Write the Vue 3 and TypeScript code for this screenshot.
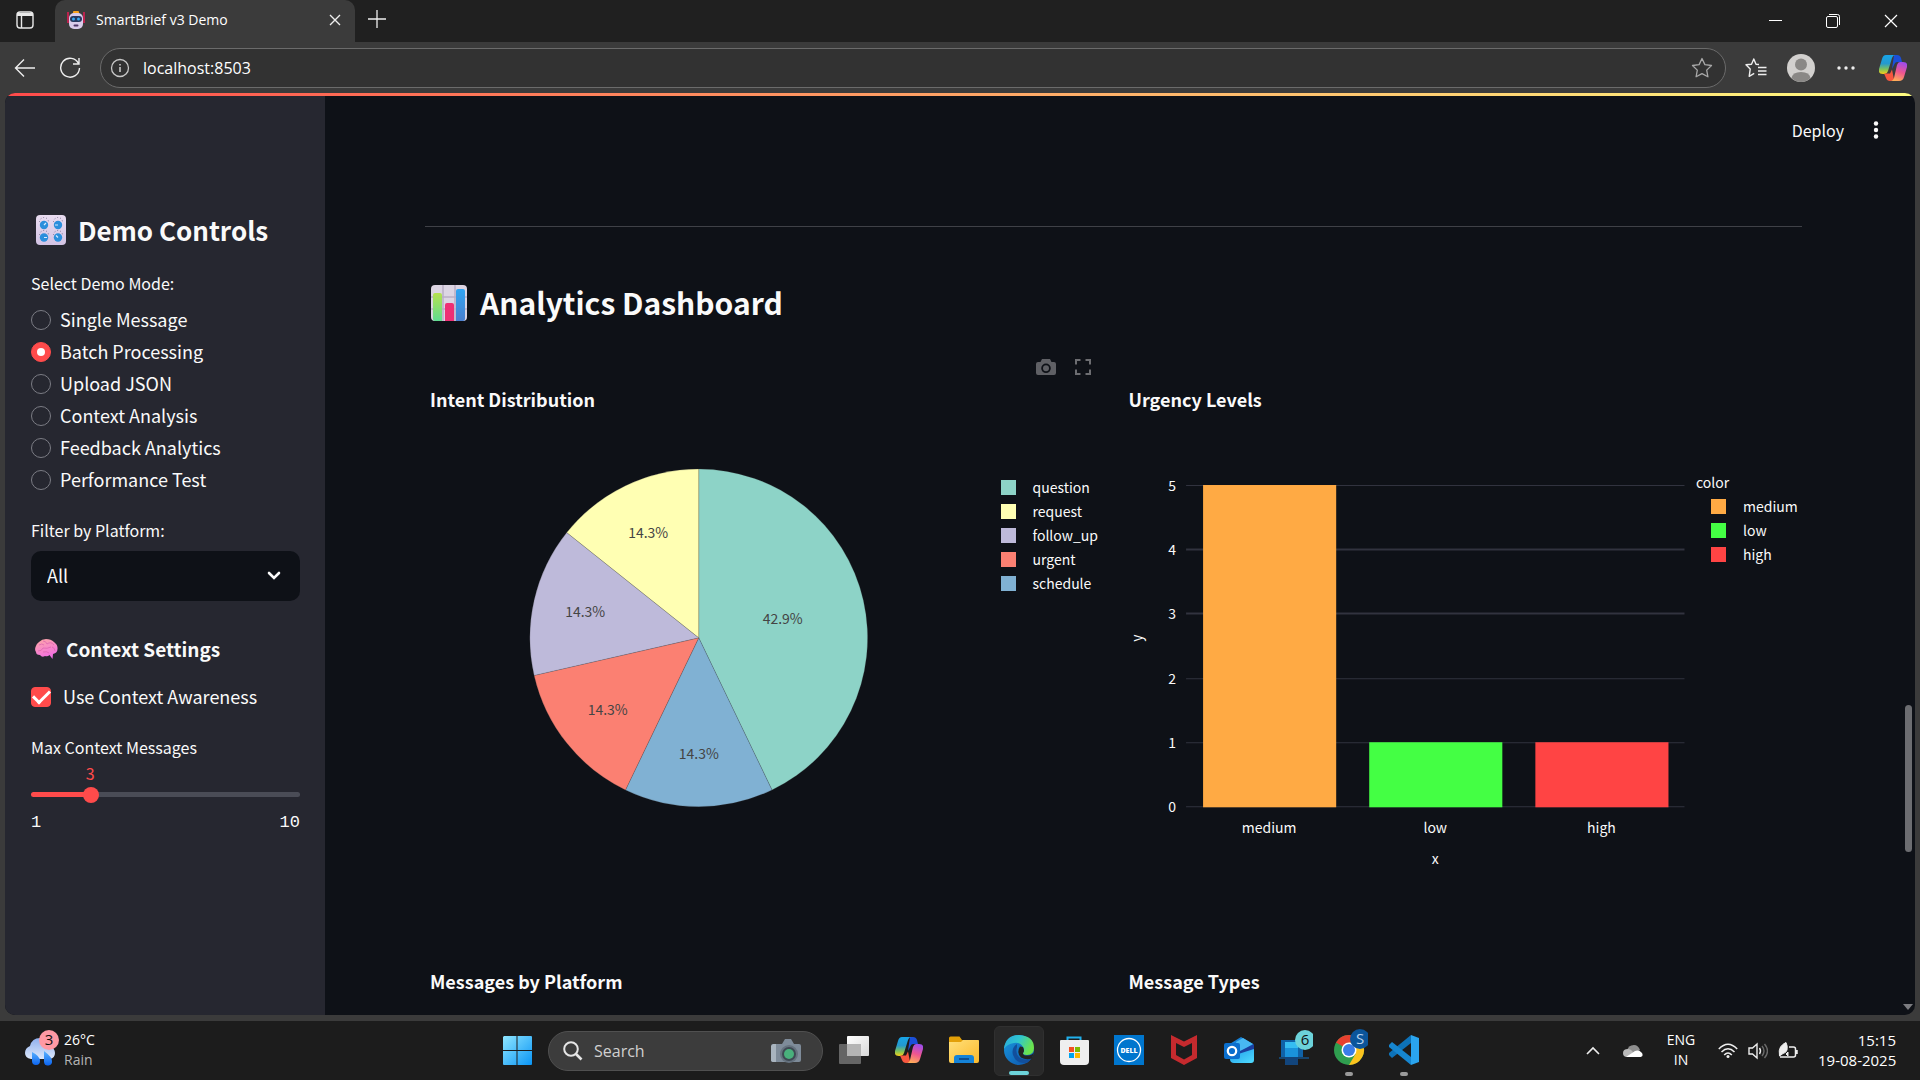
<script setup lang="ts">
import { computed, ref } from 'vue'

interface Slice { label: string; value: number; color: string }

const modes = ['Single Message', 'Batch Processing', 'Upload JSON', 'Context Analysis', 'Feedback Analytics', 'Performance Test']
const mode = ref('Batch Processing')
const platform = ref('All')
const contextAware = ref(true)
const maxMessages = ref(3)
const address = ref('localhost:8503')
const query = ref('')

const filled = computed(() => ((maxMessages.value - 1) / 9) * 100)

const intents: Slice[] = [
  { label: 'question', value: 3, color: '#8dd3c7' },
  { label: 'request', value: 1, color: '#ffffb3' },
  { label: 'follow_up', value: 1, color: '#bebada' },
  { label: 'urgent', value: 1, color: '#fb8072' },
  { label: 'schedule', value: 1, color: '#80b1d3' },
]

const cx = 274
const cy = 168
const radius = 169

/* The largest slice runs clockwise from the top, the others follow counterclockwise. */
const slices = computed(() => {
  const total = intents.reduce((sum, s) => sum + s.value, 0)
  const ordered = [intents[0], ...intents.slice(1).reverse()]
  let turn = 0
  return ordered.map((s) => {
    const a = turn * Math.PI * 2
    turn += s.value / total
    const b = turn * Math.PI * 2
    const mid = (a + b) / 2
    const large = b - a > Math.PI ? 1 : 0
    const reach = radius * (s.value > 1 ? 0.51 : 0.69)
    const at = (t: number, r: number) => `${cx + r * Math.sin(t)} ${cy - r * Math.cos(t)}`
    return {
      ...s,
      path: `M${cx} ${cy}L${at(a, radius)}A${radius} ${radius} 0 ${large} 1 ${at(b, radius)}Z`,
      x: cx + reach * Math.sin(mid),
      y: cy - reach * Math.cos(mid) + 5,
      share: `${((s.value / total) * 100).toFixed(1)}%`,
    }
  })
})

const urgency: Slice[] = [
  { label: 'medium', value: 5, color: '#ffaa44' },
  { label: 'low', value: 1, color: '#44ff44' },
  { label: 'high', value: 1, color: '#ff4444' },
]
const ticks = [0, 1, 2, 3, 4, 5]
const tickY = (v: number) => Math.round(336 - v * 64.2)
</script>

<template>
  <div class="desktop">
    <svg class="defs" width="0" height="0" aria-hidden="true">
      <defs>
        <linearGradient id="cpA" x1="0" y1="0" x2="0" y2="1"><stop offset="0" stop-color="#17a5e8" /><stop offset=".45" stop-color="#2499cf" /><stop offset=".75" stop-color="#7fc25a" /><stop offset="1" stop-color="#f6cf18" /></linearGradient>
        <linearGradient id="cpB" x1=".6" y1="0" x2=".3" y2="1"><stop offset="0" stop-color="#a04ce8" /><stop offset=".5" stop-color="#f0568f" /><stop offset="1" stop-color="#ffb057" /></linearGradient>
        <linearGradient id="edA" x1="0" y1="0" x2="1" y2=".4"><stop offset="0" stop-color="#2aa5dc" /><stop offset=".5" stop-color="#2fc6d0" /><stop offset="1" stop-color="#6be34d" /></linearGradient>
        <linearGradient id="edB" x1="0" y1="0" x2="1" y2="1"><stop offset="0" stop-color="#1b9be0" /><stop offset="1" stop-color="#0b4fa8" /></linearGradient>
        <linearGradient id="win" x1="0" y1="0" x2="1" y2="1"><stop offset="0" stop-color="#8fe6ff" /><stop offset="1" stop-color="#0a95f5" /></linearGradient>
        <linearGradient id="fold" x1="0" y1="0" x2="1" y2="1"><stop offset="0" stop-color="#ffe07a" /><stop offset="1" stop-color="#fbb92c" /></linearGradient>
        <linearGradient id="cloud" x1="0" y1="0" x2="0" y2="1"><stop offset="0" stop-color="#8fb0ee" /><stop offset="1" stop-color="#dce7fa" /></linearGradient>
        <linearGradient id="drop" x1="0" y1="0" x2="0" y2="1"><stop offset="0" stop-color="#5cb4ff" /><stop offset="1" stop-color="#0a63f0" /></linearGradient>
        <linearGradient id="pad" x1="0" y1="0" x2="0" y2="1"><stop offset="0" stop-color="#e9dcf0" /><stop offset="1" stop-color="#d2c3e4" /></linearGradient>
        <linearGradient id="brain" x1=".2" y1="0" x2=".6" y2="1"><stop offset="0" stop-color="#fda6a8" /><stop offset="1" stop-color="#f26ae6" /></linearGradient>
        <linearGradient id="gbar" x1="0" y1="0" x2="0" y2="1"><stop offset="0" stop-color="#b5e04e" /><stop offset="1" stop-color="#5fdc92" /></linearGradient>
        <linearGradient id="bbar" x1="0" y1="0" x2="0" y2="1"><stop offset="0" stop-color="#2fa5f3" /><stop offset="1" stop-color="#4a7fcf" /></linearGradient>
        <linearGradient id="taskv" x1="0" y1="0" x2="1" y2="1"><stop offset="0" stop-color="#fff" /><stop offset="1" stop-color="#d9d9d9" /></linearGradient>
        <linearGradient id="outl" x1="0" y1="0" x2="1" y2="1"><stop offset="0" stop-color="#1f9ae8" /><stop offset="1" stop-color="#50dcff" /></linearGradient>
      </defs>
      <symbol id="copilot" viewBox="0 0 28 26">
        <path d="M15 0h3q3 0 4 3l1 4h-5q-2 0-3 3l-2 4z" fill="#1b4fd8" />
        <path d="M7 0h9q-2 0-3 3L9 16q-1 3-3 3H4q-5 0-4-5L3 4q1-4 4-4z" fill="url(#cpA)" />
        <path d="M5 18.500h6l2-4 2 10q-1 1.500-4 1.500-3 0-4-3z" fill="#f7573f" />
        <path d="M21 7h3q5 0 4 5l-3 10q-1 4-5 4h-8q2 0 3-3l3-13q1-3 3-3z" fill="url(#cpB)" />
      </symbol>
    </svg>

    <header class="tabstrip">
      <button class="icon workspace" aria-label="Tab actions">
        <svg width="20" height="20" viewBox="0 0 20 20" fill="none" stroke="#e8e8e8" stroke-width="1.400"><rect x="2" y="2" width="16" height="16" rx="3" /><path d="M2 4.500h16" stroke-width="3" /><path d="M6.500 6v12" /></svg>
      </button>
      <div class="tab">
        <svg width="18" height="18" viewBox="0 0 18 18"><path d="M1 1v11M17 1v11" stroke="#e51c56" stroke-width="1.500" /><rect x="6" width="6" height="3" rx="1" fill="#f8a11c" /><rect x="2" y="2" width="14" height="16" rx="5" fill="#d9cbea" /><rect x="3" y="5" width="12" height="6" rx="3" fill="#27375e" /><circle cx="6.500" cy="8" r="1.500" fill="#38a8ef" /><circle cx="11.500" cy="8" r="1.500" fill="#38a8ef" /><rect x="6.500" y="13.500" width="5" height="2" rx="1" fill="#4c3366" /></svg>
        <span class="tab-title">SmartBrief v3 Demo</span>
        <button class="icon" aria-label="Close tab"><svg width="12" height="12" viewBox="0 0 12 12" stroke="#eee" stroke-width="1.400"><path d="M1 1l10 10M11 1L1 11" /></svg></button>
      </div>
      <button class="icon newtab" aria-label="New tab"><svg width="18" height="18" viewBox="0 0 18 18" stroke="#eee" stroke-width="1.300"><path d="M9 0v18M0 9h18" /></svg></button>
      <div class="window-buttons">
        <button class="icon" aria-label="Minimise"><svg width="14" height="14" viewBox="0 0 14 14" stroke="#fff"><path d="M1 6.500h13" /></svg></button>
        <button class="icon" aria-label="Restore"><svg width="14" height="14" viewBox="0 0 14 14" stroke="#fff" fill="none"><rect x=".5" y="2.500" width="11" height="11" rx="1.500" /><path d="M3 .5h8.500q2 0 2 2V11" /></svg></button>
        <button class="icon" aria-label="Close"><svg width="14" height="14" viewBox="0 0 14 14" stroke="#fff" stroke-width="1.200"><path d="M1 1l12 12M13 1L1 13" /></svg></button>
      </div>
    </header>

    <nav class="toolbar">
      <button class="icon" aria-label="Back"><svg width="22" height="20" viewBox="0 0 22 20" stroke="#eee" stroke-width="1.400" fill="none"><path d="M21 10H1.500M10 1.500L1.500 10l8.500 8.500" /></svg></button>
      <button class="icon" aria-label="Reload"><svg width="22" height="22" viewBox="0 0 22 22" stroke="#eee" stroke-width="1.400" fill="none"><path d="M19.500 6.500A9.400 9.400 0 1 0 20.500 11M20 1v6h-6" /></svg></button>
      <div class="address">
        <svg width="20" height="20" viewBox="0 0 20 20" fill="none" stroke="#c8c8c8" stroke-width="1.300"><circle cx="10" cy="10" r="8.500" /><path d="M10 9v5M10 6v1.500" stroke-width="1.600" /></svg>
        <input v-model="address" aria-label="Address" />
        <button class="icon" aria-label="Add to favourites"><svg width="22" height="22" viewBox="0 0 22 22" fill="none" stroke="#a8a8a8" stroke-width="1.300" stroke-linejoin="round"><path d="M11 1.500l2.900 6.100 6.600.9-4.800 4.600 1.200 6.700-5.900-3.200-5.900 3.200 1.200-6.700L1.500 8.500l6.600-.9z" /></svg></button>
      </div>
      <div class="tools">
        <button class="icon" aria-label="Favourites"><svg width="22" height="22" viewBox="0 0 22 22" fill="none" stroke="#eee" stroke-width="1.400" stroke-linejoin="round"><path d="M14 7.500L11 7.200 8.800 2 6.500 7.200 1 7.800l4.200 4.300-1 7.200 5-3M13 10.500h8.500M13 14h8.500M13 17.500h8.500" /></svg></button>
        <button class="icon" aria-label="Profile"><svg width="28" height="28" viewBox="0 0 28 28"><circle cx="14" cy="14" r="14" fill="#d2d0ce" /><circle cx="14" cy="10.500" r="6" fill="#8a8886" /><path d="M4.500 24q1-6 9.500-6t9.500 6q-4 4-9.500 4t-9.500-4z" fill="#8a8886" /></svg></button>
        <button class="icon" aria-label="Settings"><svg width="18" height="4" viewBox="0 0 18 4" fill="#eee"><circle cx="2" cy="2" r="1.700" /><circle cx="9" cy="2" r="1.700" /><circle cx="16" cy="2" r="1.700" /></svg></button>
        <button class="icon" aria-label="Copilot"><svg width="28" height="26"><use href="#copilot" /></svg></button>
      </div>
    </nav>

    <div class="frame">
      <div class="page">
        <div class="decoration"></div>
        <aside class="sidebar">
          <h2>
            <svg width="30" height="30" viewBox="0 0 30 30"><rect width="30" height="30" rx="4" fill="url(#pad)" /><g stroke="#7d7392" stroke-width="1" stroke-dasharray="1 2" fill="none"><path d="M3.500 7a4.500 4.500 0 0 1 9 0M17.500 7a4.500 4.500 0 0 1 9 0M3.500 20a4.500 4.500 0 0 1 9 0M17.500 20a4.500 4.500 0 0 1 9 0" /></g><g fill="#2b8fdc"><circle cx="8" cy="10" r="4.200" /><circle cx="22" cy="10" r="4.200" /><circle cx="8" cy="22.500" r="4.200" /><circle cx="22" cy="22.500" r="4.200" /></g><path d="M8 10l2-2M22 10h-3M8 22.500h3M22 22.500l-2-2" stroke="#d7ecff" stroke-width="1.200" /></svg>
            Demo Controls
          </h2>
          <fieldset class="modes">
            <legend>Select Demo Mode:</legend>
            <label v-for="m in modes" :key="m"><input v-model="mode" type="radio" name="mode" :value="m" />{{ m }}</label>
          </fieldset>
          <div class="field">
            <label for="platform">Filter by Platform:</label>
            <div class="select">
              <select id="platform" v-model="platform"><option>All</option></select>
              <svg width="14" height="10" viewBox="0 0 14 10" fill="none" stroke="#fafafa" stroke-width="2.600" stroke-linecap="round"><path d="M2 2l5 5 5-5" /></svg>
            </div>
          </div>
          <h3>
            <svg width="23" height="20" viewBox="0 0 23 20"><path d="M11 0q5 0 8 3 4 3 3.500 7 0 4-4.500 5l-.5 5-3-4q-2 2-4.500 1Q7 19 5 16q-4 0-4-3Q-.5 11 .5 8 1 5 4 3q3-3 7-3z" fill="url(#brain)" /><path d="M4 6q3-2 5 0M8 2q3 0 4 3 4-3 7 1M3 12q4 0 5-3 4 1 8-1M8 13q4-1 6 1M17 8q3 1 3 4" fill="none" stroke="#dd66b0" stroke-width=".8" /></svg>
            Context Settings
          </h3>
          <label class="check"><input v-model="contextAware" type="checkbox" />Use Context Awareness</label>
          <div class="field slider">
            <label for="max">Max Context Messages</label>
            <div class="value"><output for="max" :style="{ marginLeft: filled + '%' }">{{ maxMessages }}</output></div>
            <div class="track" :style="{ background: `linear-gradient(90deg, #ff4b4b ${filled}%, #4a4c56 ${filled}%)` }">
              <input id="max" v-model.number="maxMessages" type="range" min="1" max="10" />
            </div>
            <div class="bounds"><span>1</span><span>10</span></div>
          </div>
        </aside>

        <main>
          <div class="app-header">
            <button class="deploy">Deploy</button>
            <button class="icon" aria-label="Menu"><svg width="6" height="18" viewBox="0 0 6 18" fill="#fafafa"><circle cx="3" cy="2.500" r="2.200" /><circle cx="3" cy="9" r="2.200" /><circle cx="3" cy="15.500" r="2.200" /></svg></button>
          </div>
          <div class="content">
            <hr />
            <h1>
              <svg width="36" height="36" viewBox="0 0 36 36"><rect width="36" height="36" rx="4" fill="#dcd5e3" /><path d="M12 0v36M24 0v36M0 12h36M0 24h36" stroke="#b9aec6" stroke-width="1.500" /><path d="M2 10q0-2 2-2h5q2 0 2 2v26H4q-2 0-2-2z" fill="url(#gbar)" /><path d="M14 20q0-2 2-2h5q2 0 2 2v16h-9z" fill="#ee2f74" /><path d="M25 6q0-2 2-2h5q2 0 2 2v28q0 2-2 2h-7z" fill="url(#bbar)" /></svg>
              Analytics Dashboard
            </h1>
            <div class="charts">
              <section>
                <div class="modebar">
                  <button class="icon" aria-label="Download plot"><svg width="20" height="16" viewBox="0 0 20 16" fill="#5f6065"><path fill-rule="evenodd" d="M6 0h8l1.500 3H18q2 0 2 2v9q0 2-2 2H2q-2 0-2-2V5q0-2 2-2h2.500zM10 4.500a4.800 4.800 0 1 0 0 9.600 4.800 4.800 0 0 0 0-9.600z" /><circle cx="10" cy="9.300" r="3" /></svg></button>
                  <button class="icon" aria-label="Fullscreen"><svg width="16" height="16" viewBox="0 0 16 16" fill="none" stroke="#6c6d71" stroke-width="2"><path d="M1 5.500V1h4.500M10.500 1H15v4.500M15 10.500V15h-4.500M5.500 15H1v-4.500" /></svg></button>
                </div>
                <h4>Intent Distribution</h4>
                <div class="plot">
                  <svg class="graph" viewBox="0 0 548 420" role="img" aria-label="Intent distribution">
                    <path v-for="s in slices" :key="s.label" :d="s.path" :fill="s.color" stroke="#444" stroke-opacity=".4" stroke-width=".5" />
                    <text v-for="s in slices" :key="s.label" class="share" :x="s.x" :y="s.y">{{ s.share }}</text>
                  </svg>
                  <ul class="legend pie"><li v-for="s in intents" :key="s.label"><i :style="{ background: s.color }"></i>{{ s.label }}</li></ul>
                </div>
              </section>
              <section>
                <div class="modebar"></div>
                <h4>Urgency Levels</h4>
                <div class="plot">
                  <svg class="graph" viewBox="0 0 562 420" role="img" aria-label="Urgency levels">
                    <g v-for="t in ticks" :key="t">
                      <path :d="`M62 ${tickY(t)}.5h498`" stroke="#31333f" :stroke-width="t === 3 || t === 4 ? 2 : 1" />
                      <text class="tick" x="52" :y="tickY(t) + 6">{{ t }}</text>
                    </g>
                    <g v-for="(b, i) in urgency" :key="b.label">
                      <rect :x="79 + i * 166" :y="tickY(b.value)" width="133" :height="337 - tickY(b.value)" :fill="b.color" />
                      <text class="name" :x="145 + i * 166" y="363">{{ b.label }}</text>
                    </g>
                    <text class="name" x="311" y="394">x</text>
                    <text class="name" x="-168" y="18" transform="rotate(-90)">y</text>
                  </svg>
                  <div class="legend bar">
                    <span>color</span>
                    <ul><li v-for="b in urgency" :key="b.label"><i :style="{ background: b.color }"></i>{{ b.label }}</li></ul>
                  </div>
                </div>
              </section>
              <section><h4>Messages by Platform</h4></section>
              <section><h4>Message Types</h4></section>
            </div>
          </div>
          <div class="scrollbar"></div>
          <div class="scroll-arrow"></div>
        </main>
      </div>
    </div>

    <footer class="taskbar">
      <button class="weather">
        <svg width="36" height="38" viewBox="0 0 36 38"><path d="M7 29q-6-1-6-6t5-7q2-8 10-8t9 8q6 2 6 7t-5 6z" fill="url(#cloud)" /><path d="M8 22q8 4 8 9a4 4 0 0 1-8 0zM20 21q8 6 8 10a4 4 0 0 1-8 1z" fill="url(#drop)" /><circle cx="25" cy="10" r="10" fill="#ff99a4" /><text x="25" y="15" class="badge">3</text></svg>
        <span>26°C<br /><em>Rain</em></span>
      </button>
      <div class="apps">
        <button class="app" aria-label="Start"><svg width="30" height="30" viewBox="0 0 30 30" fill="url(#win)"><path d="M2 1h12.500v14H1V2zM15.500 1H29q1 0 1 1v13H15.500zM1 16h13.500v14H2q-1 0-1-1zM15.500 16H30v13q0 1-1 1H15.500z" /></svg></button>
        <label class="search">
          <svg width="20" height="20" viewBox="0 0 20 20" fill="none" stroke="#e6e6e6" stroke-width="2"><circle cx="8" cy="8" r="6.800" /><path d="M13 13l5.500 5.500" stroke-width="2.600" /></svg>
          <input v-model="query" placeholder="Search" aria-label="Search" />
          <svg width="30" height="26" viewBox="0 0 30 26"><path d="M2 6h9l3-5h6l3 5h5q2 0 2 2v14q0 2-2 2H3q-3 0-3-2V8q0-2 2-2z" fill="#7e8b99" /><path d="M2 6h3v18H3q-3 0-3-2V8z" fill="#a9b4bf" /><circle cx="18" cy="16" r="9" fill="#66727f" /><circle cx="18" cy="16" r="7" fill="#3e4953" /><circle cx="18" cy="16" r="5" fill="#49b07c" /></svg>
        </label>
        <button class="app" aria-label="Task view"><svg width="30" height="30" viewBox="0 0 30 30"><rect x="8" y="1" width="22" height="20" rx="1" fill="url(#taskv)" /><rect x="0" y="9" width="22" height="20" rx="1" fill="#707070" opacity=".88" /><rect x="8" y="9" width="14" height="12" fill="#b4b4b4" /></svg></button>
        <button class="app" aria-label="Copilot"><svg width="28" height="26"><use href="#copilot" /></svg></button>
        <button class="app" aria-label="File Explorer"><svg width="30" height="28" viewBox="0 0 30 28"><path d="M0 2q0-1.500 1.500-1.500h9L13 4h15.500Q30 4 30 6v8H0z" fill="#e3a008" /><path d="M0 6h12l2-2h15q1 0 1 1v20q0 2-2 2H2q-2 0-2-2z" fill="url(#fold)" /><path d="M5 27v-5q0-3 3-3h14q3 0 3 3v5z" fill="#1583d8" /><path d="M10 22h10v2H10z" fill="#0b4f94" /></svg></button>
        <button class="app active" aria-label="Edge"><svg width="30" height="30" viewBox="0 0 30 30"><circle cx="15" cy="15" r="15" fill="url(#edB)" /><path d="M0 13Q2 0 15 0q15 1 15 13 0 7-7 7-5 0-4-2 2-3 0-6-3-5-9-4Q3 9 0 14z" fill="url(#edA)" /><path d="M13 9Q7 13 9 20q3 9 13 8 3-1 5-4-6 2-11-1-5-4-3-11z" fill="#124f9c" /><path d="M19 12q2 4 0 6 0 3 5 2.500 4 0 6-3l-2 6q-6 2-11-1-5-5-1-11z" fill="#232323" /></svg><i></i></button>
        <button class="app" aria-label="Microsoft Store"><svg width="30" height="30" viewBox="0 0 30 30"><path d="M8.500 8V2.500h13V8" fill="none" stroke="#20b0ec" stroke-width="2" /><path d="M1 6q0-1 1-1h27q1 0 1 1v20q0 4-4 4H5q-4 0-4-4z" fill="#efefef" /><path d="M10 12h5v5h-5z" fill="#f25022" /><path d="M16 12h5v5h-5z" fill="#7fba00" /><path d="M10 18h5v5h-5z" fill="#00a4ef" /><path d="M16 18h5v5h-5z" fill="#ffb900" /></svg></button>
        <button class="app" aria-label="Dell"><svg width="30" height="30" viewBox="0 0 30 30"><rect width="30" height="30" fill="#0076ce" /><circle cx="15" cy="15" r="11.500" fill="none" stroke="#fff" stroke-width="1.300" /><text x="15" y="18" class="dell">DELL</text></svg></button>
        <button class="app" aria-label="McAfee"><svg width="28" height="30" viewBox="0 0 28 30"><path fill-rule="evenodd" d="M1 0l13 6.500L27 0v23l-13 7-13-7zM6 8v12l8 4.500 8-4.500V8l-8 4z" fill="#c52a2e" /></svg></button>
        <button class="app" aria-label="Outlook"><svg width="30" height="28" viewBox="0 0 30 28"><path d="M4 9L17 1l12 7v6L14 23z" fill="#1580d8" /><path d="M12 6l7-4 10 6-13 8z" fill="#48b8f2" /><path d="M14 16l16-8v5L14 22z" fill="#1b3f9e" /><path d="M8 20l22-7v11q0 3-3 3H10q-4 0-4-4z" fill="url(#outl)" /><rect y="7" width="16" height="16" rx="2" fill="#0b6fce" /><circle cx="8" cy="15" r="4.200" fill="none" stroke="#fff" stroke-width="2.200" /></svg></button>
        <button class="app" aria-label="Phone Link"><svg width="38" height="38" viewBox="0 0 38 38"><path d="M6 12h22v17H6z" fill="#0f62a8" /><path d="M4 29h30v2H4z" fill="#17446d" /><path d="M10 14h13v12H10z" fill="#35bdf2" /><path d="M10 20h13v9H10z" fill="#1a93dc" /><path d="M10 29h13v8H10z" fill="#12457c" /><circle cx="30" cy="12" r="10" fill="#6cd3da" /><text x="30" y="17" class="badge">6</text></svg></button>
        <button class="app" aria-label="Chrome"><svg width="38" height="38" viewBox="0 0 38 38"><circle cx="19" cy="22" r="15" fill="#2f9e4f" /><path d="M19 22L6 14.500a15 15 0 0 1 26 0z" fill="#e8402f" /><path d="M19 14.500h13A15 15 0 0 1 19 37l6.500-11z" fill="#fcc31e" /><circle cx="19" cy="22" r="7.500" fill="#fff" /><circle cx="19" cy="22" r="6" fill="#3b7de8" /><circle cx="30" cy="11" r="10" fill="#0b559b" /><text x="30" y="16" class="badge light">S</text></svg><i class="idle"></i></button>
        <button class="app" aria-label="Visual Studio Code"><svg width="30" height="30" viewBox="0 0 30 30"><path d="M22 0l8 3v24l-8 3z" fill="#2aa4ee" /><path d="M22 0v8L3 23l-3-3q-.5-1 0-2z" fill="#0d72b8" /><path d="M22 30v-8L3 7 0 10q-.5 1 0 2z" fill="#1686d0" /></svg><i class="idle"></i></button>
      </div>
      <div class="tray">
        <svg width="14" height="9" viewBox="0 0 14 9" fill="none" stroke="#eee" stroke-width="1.600"><path d="M1 8l6-6 6 6" /></svg>
        <svg width="20" height="14" viewBox="0 0 20 14"><path d="M4 7q1-6 7-6 4 0 6 5l-5 4z" fill="#8e8e8e" /><path d="M4 13q-4 0-4-4t5-4q3 0 5 3l-3 5z" fill="#b9b9b9" /><path d="M3 13l9-6q4-1.500 7 2 2 4-3 4z" fill="#fff" /></svg>
        <span class="lang">ENG<br />IN</span>
        <div class="status">
          <svg width="20" height="16" viewBox="0 0 20 16" fill="none" stroke="#eee" stroke-width="1.500"><path d="M.8 6q9.200-9.500 18.400 0M3.500 9q6.500-6.500 13 0M6.200 12q3.800-4 7.600 0" /><circle cx="10" cy="13.500" r="1.500" fill="#eee" stroke="none" /></svg>
          <svg width="20" height="18" viewBox="0 0 20 18" fill="none" stroke="#eee" stroke-width="1.400"><path d="M1 6h3.500L9 2v14l-4.500-4H1zM11.500 6q2 3 0 6" /><path d="M14 4q4 5 0 10M16.500 2q6 7 0 14" stroke="#6a6a6a" /></svg>
          <svg width="20" height="18" viewBox="0 0 20 18" fill="none" stroke="#eee" stroke-width="1.500"><path d="M11 5h4.500q2 0 2 2v6q0 2-2 2H2M19 8v4" /><path d="M8 .5q2 4 1 7.500-1 3-4 3.500L1.500 14Q.5 8 2.500 5T8 .5z" fill="#eee" stroke-width="1" /><path d="M8 12l2-2v4z" fill="#eee" stroke-width="1" /></svg>
        </div>
        <time>15:15<br />19-08-2025</time>
      </div>
    </footer>
  </div>
</template>

<style>
body { margin: 0; background: #1c1c1c; }
</style>

<style scoped>
* { box-sizing: border-box; }
.desktop { display: flex; flex-direction: column; height: 100vh; overflow: hidden; font-family: "Open Sans", "Noto Sans", sans-serif; color: #fff; background: #1c1c1c; }
.defs { position: absolute; }
svg { display: block; flex: none; }
button { margin: 0; padding: 0; border: 0; background: none; color: inherit; font: inherit; cursor: pointer; }
.icon { display: flex; align-items: center; justify-content: center; }
h1, h2, h3, h4, ul, fieldset { margin: 0; padding: 0; border: 0; }
ul { list-style: none; }

.tabstrip { display: flex; flex: none; height: 42px; background: #202020; }
.workspace { width: 50px; padding-bottom: 2px; }
.tab { display: flex; align-items: center; width: 300px; margin-left: 5px; padding: 0 14px 2px 12px; border-radius: 10px 10px 0 0; background: #3b3b3b; }
.tab-title { flex: 1; padding-left: 11px; font-size: 14px; line-height: 20px; }
.newtab { width: 44px; padding-bottom: 4px; }
.window-buttons { display: flex; margin-left: auto; }
.window-buttons .icon { width: 58px; }

.toolbar { display: flex; flex: none; align-items: center; height: 51px; padding: 0 10px 0 14px; background: #3b3b3b; }
.toolbar > .icon { width: 22px; margin-right: 23px; }
.toolbar > .icon + .icon { margin-right: 19px; }
.address { display: flex; flex: 1; align-items: center; height: 40px; padding: 0 12px 0 9px; border: 1px solid #6b6b6b; border-radius: 20px; background: #323232; }
.address input { flex: 1; min-width: 0; padding: 0 0 0 13px; border: 0; outline: 0; background: none; color: #fff; font: 16px/24px "Open Sans", "Noto Sans", sans-serif; }
.tools { display: flex; align-items: center; }
.tools .icon { width: 60px; }
.tools .icon:nth-child(2) { width: 30px; }
.tools .icon:last-child { width: 34px; }

.frame { flex: 1; min-height: 0; padding: 0 5px 6px; background: #3b3b3b; }
.page { position: relative; display: flex; height: 100%; overflow: hidden; border-radius: 10px; background: #0e1117; font-family: "Noto Sans CJK SC", "Noto Sans", sans-serif; color: #fafafa; }
.decoration { position: absolute; inset: 0 0 auto; height: 3px; background: linear-gradient(90deg, #ff4b4b, #fffd80); }

.sidebar { flex: none; width: 320px; padding: 115px 25px 0 26px; background: #262730; font-size: 18px; line-height: 32px; }
.sidebar h2 { display: flex; align-items: center; gap: 12px; height: 44px; padding-left: 5px; font-size: 26px; line-height: 44px; font-weight: 600; }
.sidebar h3 { display: flex; align-items: center; gap: 8px; margin-top: 32px; padding-left: 4px; font-size: 19px; line-height: 32px; font-weight: 600; }
.modes { display: flex; flex-direction: column; margin-top: 19px; }
.modes legend, .field > label { display: block; padding: 0; font-size: 16px; line-height: 24px; }
.modes legend { margin-bottom: 8px; }
.modes label, .check { display: flex; align-items: center; gap: 9px; height: 32px; }
.modes input, .check input { appearance: none; display: grid; place-content: center; width: 20px; height: 20px; margin: 2px 0 0; border: 1px solid #7b7c84; border-radius: 10px; }
.modes input:checked { border-color: #ff4b4b; background: #ff4b4b; }
.modes input:checked::before { content: ""; width: 8px; height: 8px; border-radius: 4px; background: #fff; }
.check { gap: 12px; margin-top: 15px; }
.check input { border-radius: 4px; }
.check input:checked { border-color: #ff4b4b; background: #ff4b4b; }
.check input:checked::before { content: ""; width: 14px; height: 7px; margin-bottom: 4px; border: solid #fff; border-width: 0 0 3px 3px; transform: rotate(-45deg); }
.field { margin-top: 23px; }
.select { position: relative; margin-top: 9px; }
.select select { appearance: none; width: 100%; height: 50px; padding: 0 16px 2px; border: 0; border-radius: 10px; background: #0e1117; color: inherit; font: inherit; }
.select svg { position: absolute; top: 20px; right: 19px; pointer-events: none; }
.value { height: 25px; padding-top: 2px; color: #ff4b4b; font-size: 16px; line-height: 24px; }
.value output { display: block; width: 0; text-indent: -5px; white-space: nowrap; }
.track { display: flex; align-items: center; height: 5px; margin-top: 8px; border-radius: 3px; }
.track input { appearance: none; flex: none; width: calc(100% + 16px); height: 16px; margin: 0 -8px; background: none; }
.track input::-webkit-slider-thumb { appearance: none; width: 16px; height: 16px; border-radius: 8px; background: #ff4b4b; }
.bounds { display: flex; justify-content: space-between; margin-top: 14px; font: 17px/24px "Liberation Mono", monospace; }

main { position: relative; flex: 1; min-width: 0; }
.app-header { display: flex; align-items: center; justify-content: flex-end; gap: 29px; height: 75px; padding: 0 36px 2px 0; font-size: 16px; }
.content { padding: 58px 113px 0 100px; }
hr { height: 1px; margin: 0; border: 0; background: #3f4147; }
h1 { display: flex; align-items: center; gap: 13px; height: 48px; margin-top: 51px; padding-left: 6px; font-size: 30px; line-height: 48px; font-weight: 600; }
h1 svg { margin-top: 2px; }
.charts { display: grid; grid-template-columns: 1fr 1fr; column-gap: 20px; margin-top: 32px; }
.modebar { display: flex; justify-content: flex-end; gap: 19px; height: 18px; padding-right: 13px; }
h4 { padding-left: 5px; font-size: 18px; line-height: 26px; font-weight: 700; }
.modebar + h4 { margin-top: 10px; }
.plot { display: flex; align-items: flex-start; margin-top: 58px; margin-bottom: 78px; }
.graph { flex: 1; min-width: 0; overflow: visible; font-size: 14px; }
.graph text { fill: #fafafa; }
.graph .share { fill: #444; text-anchor: middle; }
.graph .tick { text-anchor: end; }
.graph .name { text-anchor: middle; }
.legend { font-size: 14px; line-height: 24px; }
.legend li { display: flex; align-items: center; gap: 17px; height: 24px; white-space: nowrap; }
.legend i { width: 15px; height: 15px; }
.legend.pie { width: 103px; margin: 5px 0 0 28px; }
.legend.bar { width: 106px; margin: 1px 0 0 10px; }
.legend.bar span { display: block; line-height: 23px; }
.legend.bar ul { padding-left: 15px; }
.scrollbar { position: absolute; top: 612px; right: 3px; width: 7px; height: 147px; border-radius: 4px; background: #6c6d71; }
.scroll-arrow { position: absolute; right: 2px; bottom: 5px; border: 5px solid transparent; border-top: 6px solid #7b7c80; border-bottom: 0; }

.taskbar { display: grid; grid-template-columns: 1fr auto 1fr; flex: none; align-items: center; height: 59px; background: #1c1c1c; font-size: 14px; line-height: 20px; }
.weather { display: flex; align-items: center; gap: 4px; justify-self: start; padding: 0 0 2px 24px; text-align: left; line-height: 20px; }
.weather svg { margin-top: -2px; }
.weather em { font-style: normal; color: #b5b5b5; }
.badge { fill: #111; font-size: 15px; text-anchor: middle; }
.badge.light { fill: #b9d4ee; }
.dell { fill: #fff; font-size: 7px; font-weight: 800; text-anchor: middle; }
.apps { display: flex; align-items: center; }
.app { position: relative; display: flex; align-items: center; justify-content: center; width: 50px; height: 50px; margin: 0 2px 0 3px; border-radius: 6px; }
.app svg { margin-bottom: 1px; }
.app svg[width="38"] { margin-bottom: 8px; }
.active { background: #292929; border: 1px solid #303030; }
.app i { position: absolute; bottom: 0; width: 20px; height: 4px; border-radius: 2px; background: #6cd3da; }
.app i.idle { width: 8px; background: #9a9a9a; }
.search { display: flex; align-items: center; width: 275px; height: 40px; margin: 0 3px 0 4px; padding: 0 21px 0 14px; border: 1px solid #505050; border-radius: 20px; background: #3c3c3c; }
.search input { flex: 1; min-width: 0; padding: 0 0 0 11px; border: 0; outline: 0; background: none; color: #fff; font: 16px/24px "Open Sans", "Noto Sans", sans-serif; }
.search input::placeholder { color: #d0d0d0; opacity: 1; }
.tray { display: flex; align-items: center; justify-self: end; padding: 0 24px 0 0; }
.tray > svg { margin-right: 23px; }
.lang, time { padding-bottom: 2px; }
.lang { width: 30px; text-align: center; }
.status { display: flex; align-items: center; gap: 10px; margin: 0 20px 0 22px; }
time { width: 78px; font-size: 15px; text-align: right; white-space: nowrap; }
</style>
